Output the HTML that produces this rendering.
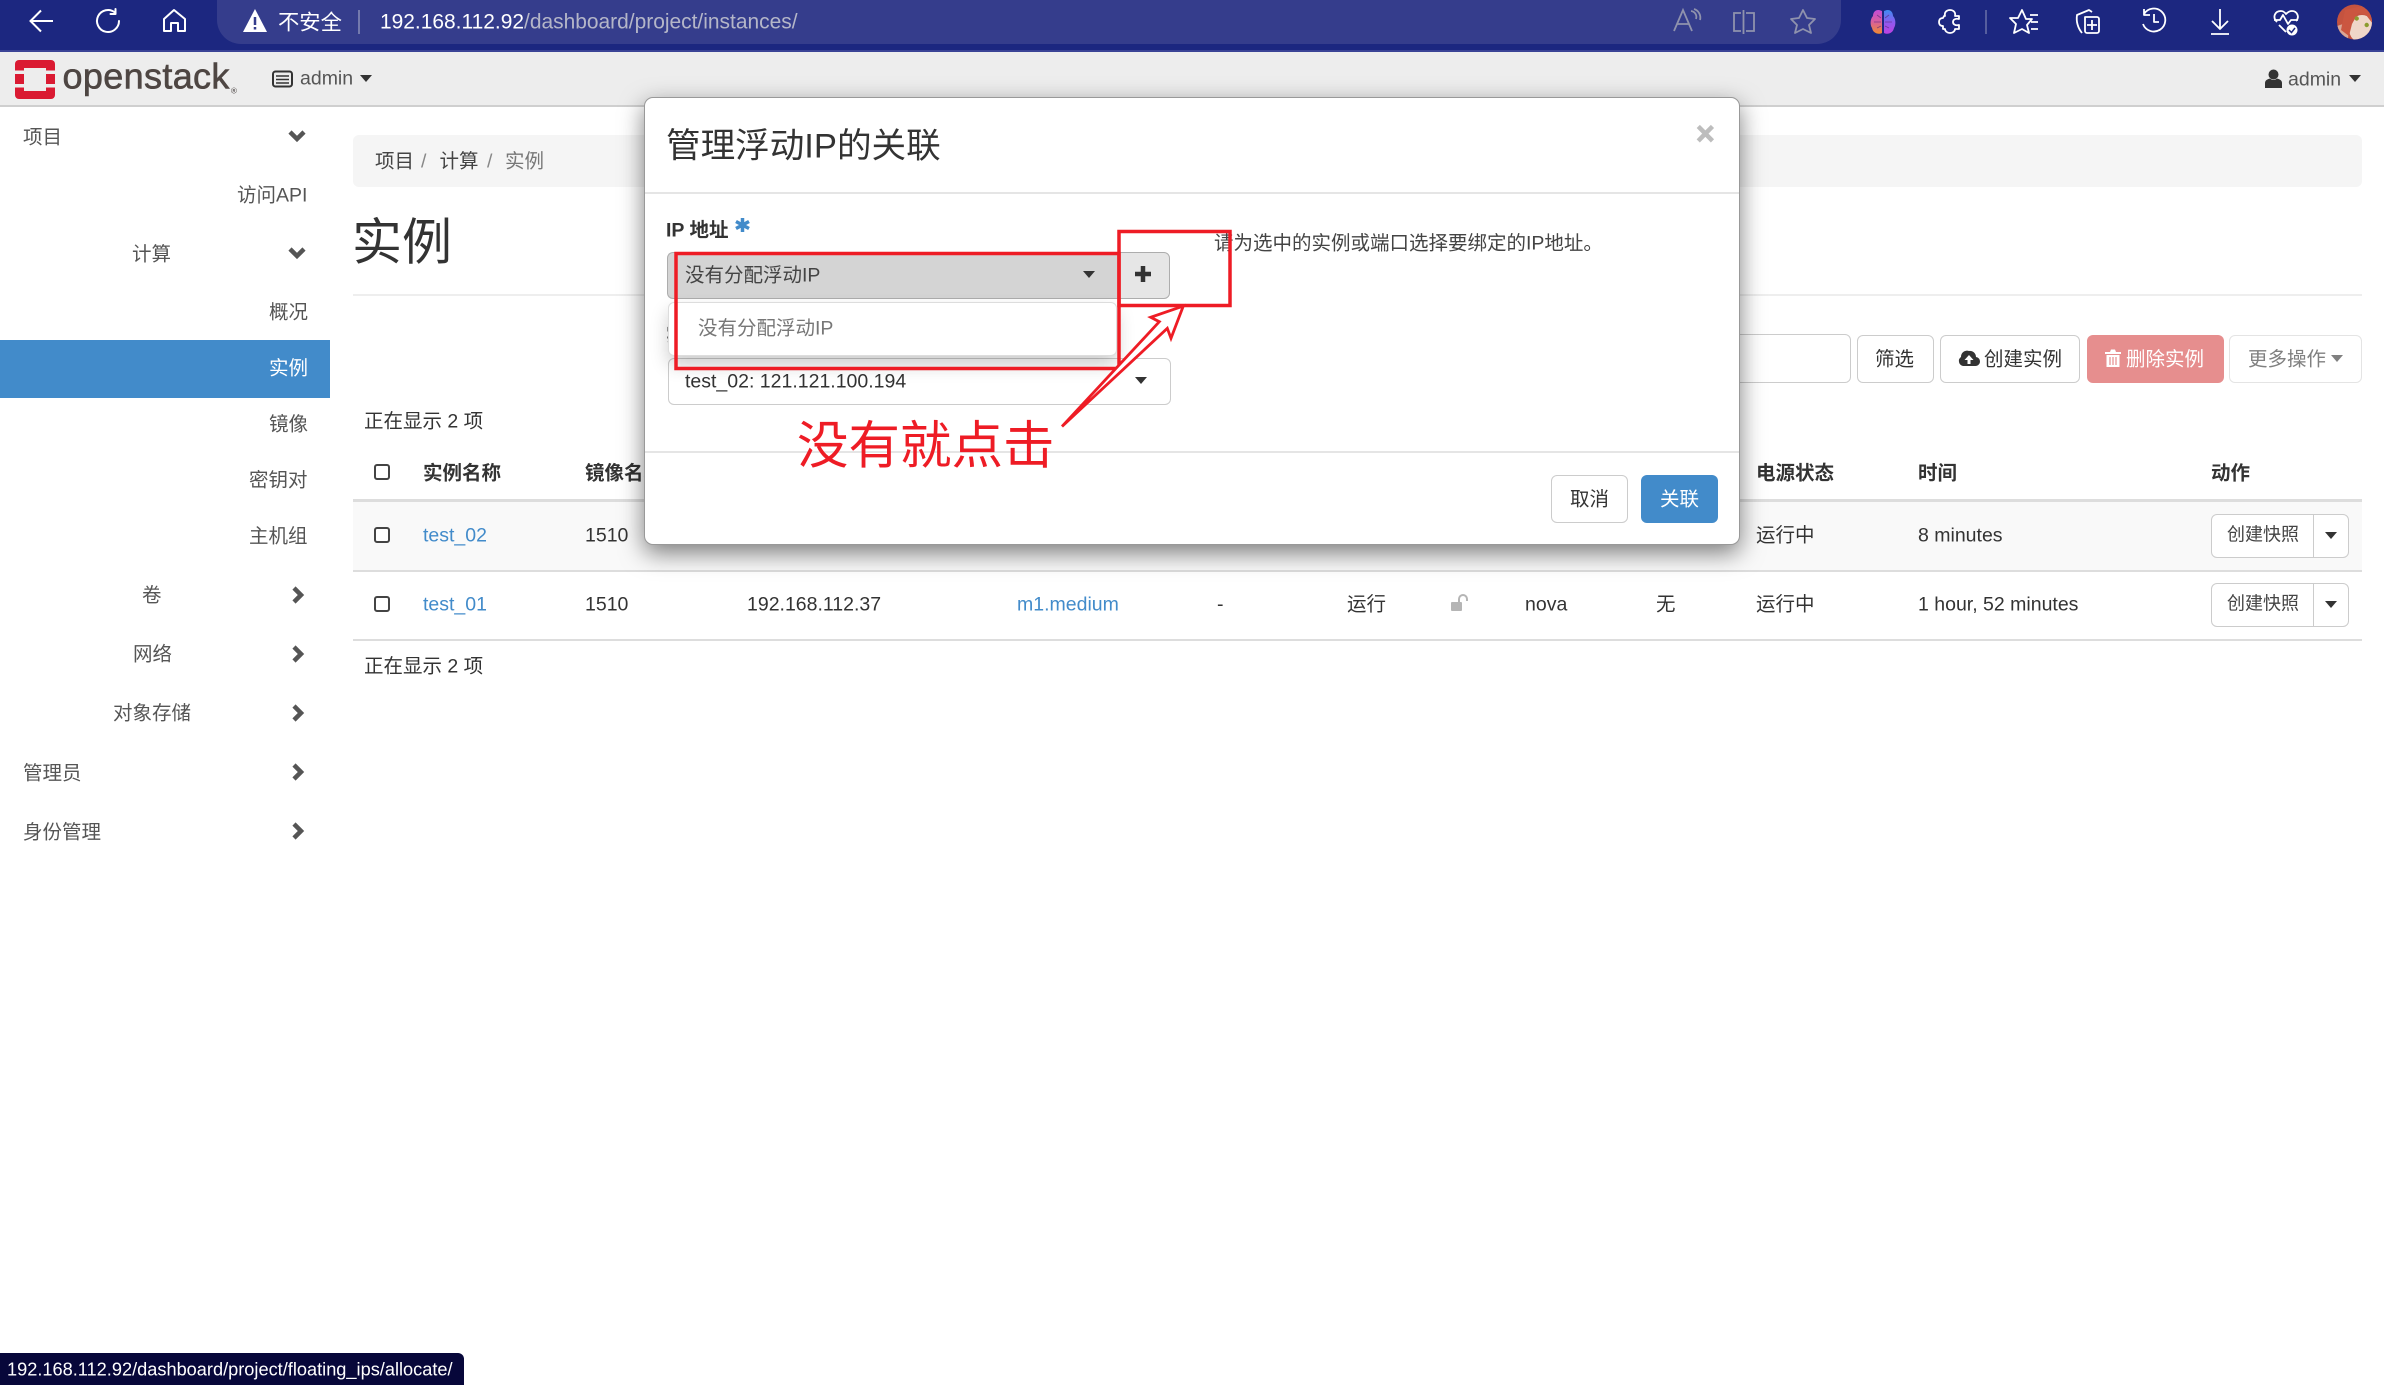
<!DOCTYPE html>
<html lang="zh"><head><meta charset="utf-8"><title>实例</title>
<style>
*{box-sizing:border-box}
html,body{margin:0;padding:0;width:2384px;height:1385px;overflow:hidden;background:#fff}
body{font-family:"Liberation Sans","Noto Sans CJK SC",sans-serif;font-size:19.5px;color:#333;position:relative}
.t{position:absolute;white-space:nowrap;line-height:30px;height:30px;transform:translateY(1.5px)}
.b{font-weight:bold}
.a{color:#428bca}
.s{color:#555}
.box{position:absolute}
.btn{position:absolute;border:1.5px solid #ccc;border-radius:6px;background:#fff}
.caret{position:absolute;width:0;height:0;border-left:6.5px solid transparent;border-right:6.5px solid transparent;border-top:7px solid #333}
.cb{position:absolute;width:16px;height:16px;border:2px solid #444;border-radius:3px;background:#fff}
svg{position:absolute;overflow:visible}
</style></head><body>

<!-- browser bar -->
<div class="box" style="left:0;top:0;width:2384px;height:50px;background:#1c2780"></div>
<div class="box" style="left:0;top:50px;width:2384px;height:2px;background:#3a4396"></div>
<div class="box" style="left:217px;top:0;width:1624px;height:44px;background:#353d8c;border-radius:0 0 24px 24px"></div>
<svg style="left:0;top:0" width="2384" height="52" fill="none" stroke="#fff" stroke-width="2">
 <path d="M53 21H31M41 10.500L30.500 21 41 31.500"/>
 <path d="M115 12.500A11 11 0 1 0 119 21M115.500 9V14H110.500" stroke-linecap="round" stroke-linejoin="round"/>
 <path d="M164 19L174 10 185 19V31H178V23H171V31H164Z" stroke-linejoin="round"/>
 <path d="M255 9L267 32H243Z" fill="#fff" stroke="none"/><path d="M255 17V25M255 27V29.500" stroke="#353d8c" stroke-width="2.500"/>
 <path d="M359 10V34" stroke="#8a8fb8" stroke-width="1.500"/>
 <g stroke="#8f92ad" stroke-width="1.800">
  <path d="M1674 31L1683 10 1692 31M1677 24H1689M1691 11A6 6 0 0 1 1696 19M1694 9A9 9 0 0 1 1700 20"/>
  <path d="M1741 13H1734V31H1741M1746 13H1754V31H1746M1743.500 10V34"/>
  <path d="M1803 10L1807 18 1815 19 1809 25 1811 33 1803 29 1795 33 1797 25 1791 19 1799 18Z" stroke-linejoin="round"/>
 </g>
 <g stroke="#fff" stroke-width="1.800" stroke-linejoin="round">
  <path d="M1944 16H1945C1944 12 1947 10 1950 10 1953 10 1956 12 1955 16H1959V19C1955 18 1953 20 1953 22 1953 24 1955 26 1959 25V29H1955C1955 31 1953 33 1950 33 1947 33 1945 31 1945 29H1943V26C1940 26 1939 24 1939 22 1939 20 1940 18 1943 18Z"/>
  <path d="M2022 10L2026 19 2032 19 2027 25 2029 33 2022 29 2014 33 2016 24 2010 18 2018 18ZM2030 15H2038M2031 22H2038M2031 29H2038"/>
  <path d="M2082 33C2078 28 2076 22 2077 15L2089 10 2092 12M2085 17H2097A2 2 0 0 1 2099 19V31A2 2 0 0 1 2097 33H2087A2 2 0 0 1 2085 31ZM2092 20V30M2087 25H2097"/>
  <path d="M2144 14A11.500 11.500 0 1 1 2143 24M2144 9V15H2150M2154 14V22H2159"/>
  <path d="M2220 9V29M2212 21L2220 29 2228 21M2211 34H2229"/>
  <path d="M2277 22C2272 17 2275 11 2281 11 2284 11 2286 14 2286 14 2286 14 2289 11 2292 11 2297 11 2300 17 2296 21M2274 20H2280L2283 15 2288 24 2291 20H2298M2279 25L2286 32"/>
 </g>
 <path d="M1986 10V34" stroke="#6a70a8" stroke-width="1.500"/>
 <circle cx="2292" cy="30" r="5.500" fill="#fff" stroke="none"/><path d="M2289 30L2291.500 32.500 2295 28" stroke="#1c2780" stroke-width="1.500"/>
 <g stroke="none">
  <path d="M1882 11C1876 8 1873 12 1873 16 1870 19 1870 25 1872 28 1873 33 1878 35 1882 33Z" fill="url(#bl)"/>
  <path d="M1884 11C1890 8 1893 12 1893 16 1896 19 1896 25 1894 28 1893 33 1888 35 1884 33Z" fill="url(#br)"/>
  <circle cx="2354.500" cy="22" r="17.500" fill="#c4533f"/>
  <g clip-path="url(#av)">
   <ellipse cx="2362" cy="29" rx="13" ry="14" fill="#efd6c8"/>
   <path d="M2337 26L2349 22 2348 40H2337Z" fill="#d9a796"/>
   <path d="M2345 10L2362 6 2372 14 2373 24 2366 15 2358 13 2352 24 2349 36 2341 30Z" fill="#cb5640"/>
  </g>
  <circle cx="2356.700" cy="18.500" r="2.200" fill="#8c9b2e"/><circle cx="2366.700" cy="25" r="2.200" fill="#8c9b2e"/>
 </g>
 <g stroke="#5b2a7a" stroke-width=".8" opacity=".7"><path d="M1874 22H1881M1877 15L1881 18M1877 28L1881 26M1885 22H1892M1889 15L1885 18M1889 28L1885 26"/></g>
 <defs>
  <linearGradient id="bl" x1="0" y1="0" x2="0" y2="1"><stop offset="0" stop-color="#c24bd8"/><stop offset=".5" stop-color="#d8609c"/><stop offset="1" stop-color="#f08a30"/></linearGradient>
  <linearGradient id="br" x1="0" y1="0" x2="0" y2="1"><stop offset="0" stop-color="#3d8cf0"/><stop offset=".5" stop-color="#8a5cf0"/><stop offset="1" stop-color="#c040e0"/></linearGradient>
  <clipPath id="av"><circle cx="2354.500" cy="22" r="17.500"/></clipPath>
 </defs>
</svg>
<div class="t" style="left:278px;top:6px;color:#fff;font-size:21.300px">不安全</div>
<div class="t" style="left:380px;top:6px;color:#fff;font-size:20.950px">192.168.112.92<span style="color:#b4b6c8">/dashboard/project/instances/</span></div>

<!-- header -->
<div class="box" style="left:0;top:52px;width:2384px;height:55px;background:#ededed;border-bottom:2px solid #cfcfcf"></div>
<svg style="left:15px;top:60px" width="41" height="40">
 <rect width="40" height="39" rx="4" fill="#da1a32"/>
 <rect x="9" y="8" width="22" height="23" fill="#ededed"/>
 <rect x="0" y="10.500" width="40" height="3.500" fill="#ededed"/><rect x="0" y="24" width="40" height="3.500" fill="#ededed"/>
</svg>
<div class="t" style="left:62.500px;top:55px;height:40px;line-height:40px;font-size:36px;letter-spacing:.35px;color:#4e4643;-webkit-text-stroke:.6px #4e4643">openstack</div>
<div class="t" style="left:231px;top:75px;font-size:8px;color:#4a4443">®</div>
<svg style="left:272px;top:70px" width="22" height="18" fill="none" stroke="#333" stroke-width="2"><rect x="1" y="1.500" width="19" height="15" rx="2.500"/><path d="M4 6H17M4 9.500H17M4 13H17" stroke-width="1.500"/></svg>
<div class="t s" style="left:300px;top:62px">admin</div>
<div class="caret" style="left:360px;top:75px"></div>
<svg style="left:2265px;top:69px" width="17" height="20" fill="#333"><circle cx="8.500" cy="5.500" r="5"/><path d="M0 19V14C0 11 3 10 5 9.500 7 11.500 10 11.500 12 9.500 14 10 17 11 17 14V19Z"/></svg>
<div class="t s" style="left:2288px;top:63px">admin</div>
<div class="caret" style="left:2349px;top:75px"></div>

<!-- sidebar -->
<div class="box" style="left:0;top:340px;width:330px;height:58px;background:#428bca"></div>
<div class="t s" style="left:23px;top:121px">项目</div>
<div class="t s" style="left:237px;top:179px">访问API</div>
<div class="t s" style="left:132px;top:238px">计算</div>
<div class="t s" style="left:269px;top:296px">概况</div>
<div class="t" style="left:269px;top:352px;color:#fff">实例</div>
<div class="t s" style="left:269px;top:408px">镜像</div>
<div class="t s" style="left:249px;top:464px">密钥对</div>
<div class="t s" style="left:249px;top:520px">主机组</div>
<div class="t s" style="left:142px;top:579px">卷</div>
<div class="t s" style="left:133px;top:638px">网络</div>
<div class="t s" style="left:113px;top:697px">对象存储</div>
<div class="t s" style="left:23px;top:757px">管理员</div>
<div class="t s" style="left:23px;top:816px">身份管理</div>
<svg style="left:0;top:0" width="330" height="860" fill="none" stroke="#555" stroke-width="4.500">
 <path d="M290 132L297 139 304 132M290 249L297 256 304 249"/>
 <path d="M294 588L301 595 294 602M294 647L301 654 294 661M294 706L301 713 294 720M294 765L301 772 294 779M294 824L301 831 294 838"/>
</svg>

<!-- breadcrumb / title -->
<div class="box" style="left:353px;top:135px;width:2009px;height:52px;background:#f5f5f5;border-radius:6px"></div>
<div class="t" style="left:375px;top:145px;color:#444">项目</div>
<div class="t" style="left:421px;top:145px;color:#888">/</div>
<div class="t" style="left:439.500px;top:145px;color:#444">计算</div>
<div class="t" style="left:487px;top:145px;color:#888">/</div>
<div class="t" style="left:505px;top:145px;color:#777">实例</div>
<div class="t" style="left:352px;top:206px;height:70px;line-height:70px;font-size:50px">实例</div>
<div class="box" style="left:353px;top:294px;width:2009px;height:1.500px;background:#eee"></div>

<!-- toolbar -->
<div class="btn" style="left:1700px;top:334px;width:151px;height:49px"></div>
<div class="btn" style="left:1857px;top:335px;width:77px;height:48px"></div>
<div class="t" style="left:1875px;top:343px">筛选</div>
<div class="btn" style="left:1940px;top:335px;width:140px;height:48px"></div>
<svg style="left:1958px;top:349px" width="22" height="18"><path d="M5 17A5 5 0 0 1 3 8 6 6 0 0 1 11 2 6 6 0 0 1 18 8 4.500 4.500 0 0 1 17 17Z" fill="#333"/><path d="M11 6L6.500 11H9.500V15H12.500V11H15.500Z" fill="#fff"/></svg>
<div class="t" style="left:1984px;top:343px">创建实例</div>
<div class="box" style="left:2087px;top:335px;width:137px;height:48px;background:#e68e8e;border-radius:6px"></div>
<svg style="left:2105px;top:349px" width="16" height="18" fill="#fff"><path d="M0 3H5L6 0.500H10L11 3H16V5H0ZM1.500 6H14.500V18H1.500Z"/><path d="M5 8V16M8 8V16M11 8V16" stroke="#e68e8e" stroke-width="1.200"/></svg>
<div class="t" style="left:2126px;top:343px;color:#fff">删除实例</div>
<div class="btn" style="left:2229px;top:335px;width:133px;height:48px;border-color:#e4e4e4"></div>
<div class="t" style="left:2248px;top:343px;color:#808080">更多操作</div>
<div class="caret" style="left:2331px;top:355px;border-top-color:#808080"></div>

<div class="t" style="left:364px;top:405px">正在显示 2 项</div>

<!-- table -->
<div class="box" style="left:353px;top:502px;width:2009px;height:69px;background:#f9f9f9"></div>
<div class="box" style="left:353px;top:499px;width:2009px;height:3px;background:#ddd"></div>
<div class="box" style="left:353px;top:570px;width:2009px;height:1.500px;background:#ddd"></div>
<div class="box" style="left:353px;top:639px;width:2009px;height:1.500px;background:#ddd"></div>
<div class="cb" style="left:374px;top:464px"></div>
<div class="cb" style="left:374px;top:527px"></div>
<div class="cb" style="left:374px;top:596px"></div>
<div class="t b" style="left:423px;top:457px">实例名称</div>
<div class="t b" style="left:585px;top:457px">镜像名称</div>
<div class="t b" style="left:1756px;top:457px">电源状态</div>
<div class="t b" style="left:1918px;top:457px">时间</div>
<div class="t b" style="left:2211px;top:457px">动作</div>

<div class="t a" style="left:423px;top:519px">test_02</div>
<div class="t" style="left:585px;top:519px">1510</div>
<div class="t" style="left:1756px;top:519px">运行中</div>
<div class="t" style="left:1918px;top:519px">8 minutes</div>

<div class="t a" style="left:423px;top:588px">test_01</div>
<div class="t" style="left:585px;top:588px">1510</div>
<div class="t" style="left:747px;top:588px">192.168.112.37</div>
<div class="t a" style="left:1017px;top:588px">m1.medium</div>
<div class="t" style="left:1217px;top:588px">-</div>
<div class="t" style="left:1347px;top:588px">运行</div>
<svg style="left:1450px;top:594px" width="20" height="18"><rect x="1" y="8" width="11" height="9" rx="1" fill="#b5b5b5"/><path d="M9 8V5A4 4 0 0 1 17 5V7" fill="none" stroke="#b5b5b5" stroke-width="2"/></svg>
<div class="t" style="left:1525px;top:588px">nova</div>
<div class="t" style="left:1656px;top:588px">无</div>
<div class="t" style="left:1756px;top:588px">运行中</div>
<div class="t" style="left:1918px;top:588px">1 hour, 52 minutes</div>

<div class="btn" style="left:2211px;top:514px;width:103px;height:44px;border-radius:6px 0 0 6px"></div>
<div class="btn" style="left:2313px;top:514px;width:36px;height:44px;border-radius:0 6px 6px 0"></div>
<div class="t" style="left:2227px;top:518px;color:#444;font-size:18px">创建快照</div>
<div class="caret" style="left:2325px;top:532px"></div>
<div class="btn" style="left:2211px;top:583px;width:103px;height:44px;border-radius:6px 0 0 6px"></div>
<div class="btn" style="left:2313px;top:583px;width:36px;height:44px;border-radius:0 6px 6px 0"></div>
<div class="t" style="left:2227px;top:587px;color:#444;font-size:18px">创建快照</div>
<div class="caret" style="left:2325px;top:601px"></div>

<div class="t" style="left:364px;top:650px">正在显示 2 项</div>

<!-- modal -->
<div class="box" style="left:644px;top:97px;width:1096px;height:448px;background:#fff;border-radius:9px;border:1px solid #999;box-shadow:0 8px 24px rgba(0,0,0,.5)"></div>
<div class="box" style="left:645px;top:192px;width:1094px;height:1.500px;background:#e5e5e5"></div>
<div class="box" style="left:645px;top:451px;width:1094px;height:1.500px;background:#e5e5e5"></div>
<div class="t" style="left:666px;top:120px;height:50px;line-height:50px;font-size:34.600px">管理浮动IP的关联</div>
<div class="t b" style="left:1696px;top:112px;height:40px;line-height:40px;font-size:32px;color:#bdbdbd;-webkit-text-stroke:1px #bdbdbd">×</div>
<div class="t b" style="left:666px;top:213.500px">IP 地址</div>
<svg style="left:735px;top:217px" width="15" height="16" stroke="#428bca" stroke-width="3.500"><path d="M7.500 1V15M1 4.500L14 11.500M14 4.500L1 11.500"/></svg>

<div class="box" style="left:1110px;top:252px;width:60px;height:47px;background:#e6e6e6;border:1.500px solid #adadad;border-radius:0 6px 6px 0"></div>
<div class="box" style="left:667px;top:252px;width:451px;height:47px;background:#d4d4d4;border:1.500px solid #adadad;border-right:0;border-radius:6px 0 0 6px"></div>
<svg style="left:1135px;top:266px" width="16" height="16"><path d="M8 0V16M0 8H16" stroke="#333" stroke-width="4.500"/></svg>
<div class="t" style="left:685px;top:259px;color:#444">没有分配浮动IP</div>
<div class="caret" style="left:1083px;top:271px"></div>

<div class="t b" style="left:666px;top:319px;font-size:19.500px;width:6px;overflow:hidden">实</div>
<div class="box" style="left:667.500px;top:358px;width:503px;height:47px;background:#fff;border:1.500px solid #ccc;border-radius:6px"></div>
<div class="t" style="left:685px;top:365px;color:#333">test_02: 121.121.100.194</div>
<div class="caret" style="left:1135px;top:377px"></div>

<div class="box" style="left:668px;top:302px;width:449px;height:54px;background:#fff;border:1.500px solid #ddd;border-radius:6px;box-shadow:0 9px 18px rgba(0,0,0,.2)"></div>
<div class="t" style="left:698px;top:312px;color:#777">没有分配浮动IP</div>

<div class="t" style="left:1214px;top:226.500px;color:#444">请为选中的实例或端口选择要绑定的IP地址。</div>

<div class="btn" style="left:1551px;top:475px;width:77px;height:48px"></div>
<div class="t" style="left:1570px;top:483px">取消</div>
<div class="box" style="left:1641px;top:475px;width:77px;height:48px;background:#428bca;border-radius:6px"></div>
<div class="t" style="left:1660px;top:483px;color:#fff">关联</div>

<!-- annotations -->
<svg style="left:0;top:0;z-index:5" width="2384" height="1385" fill="none" stroke="#ee1c25" stroke-width="3.500">
 <rect x="676" y="253.500" width="443" height="115"/>
 <rect x="1119" y="231.500" width="111" height="74"/>
 <path d="M1062 426.500L1159.300 321.700 1150.700 317.300 1183.300 306 1171 338.300 1167.300 328.300Z" fill="#fff" stroke-width="2.800" stroke-linejoin="miter"/>
</svg>
<div class="t" style="left:797px;top:408.500px;z-index:6;height:70px;line-height:70px;font-size:51.500px;color:#ee1c25">没有就点击</div>

<!-- status bubble -->
<div class="box" style="left:0;top:1353px;width:464px;height:32px;background:#07073a;border-radius:0 6px 0 0"></div>
<div class="t" style="left:7px;top:1353px;color:#fff;font-size:18.200px">192.168.112.92/dashboard/project/floating_ips/allocate/</div>
</body></html>
